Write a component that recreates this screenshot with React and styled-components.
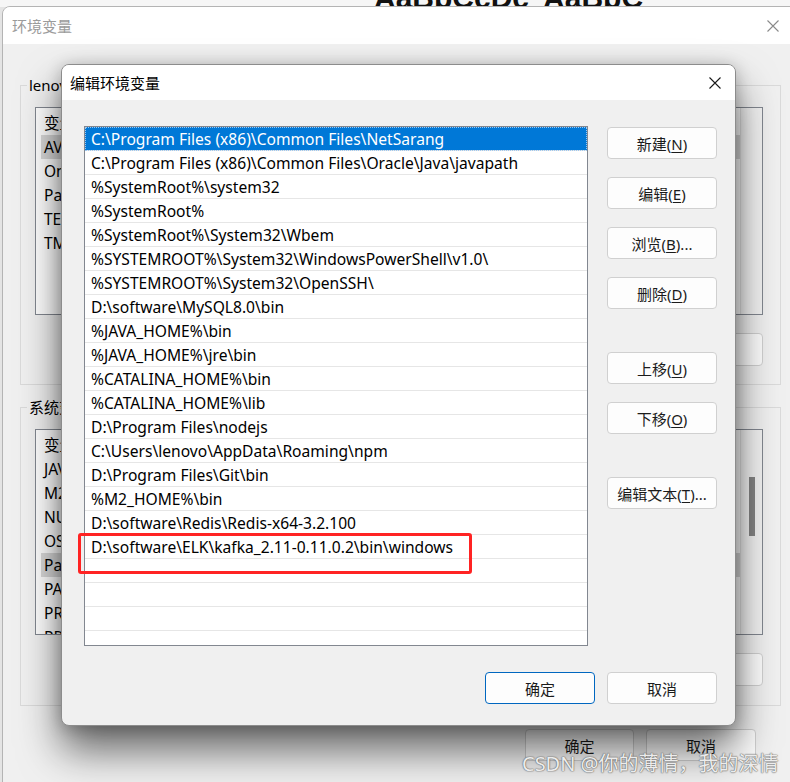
import React from 'react';
import styled, { createGlobalStyle } from 'styled-components';

const GlobalStyle = createGlobalStyle`
  html, body { margin: 0; padding: 0; }
  body {
    width: 790px;
    height: 782px;
    overflow: hidden;
    background: #e4e4e4;
    font-family: "Noto Sans", "Noto Sans CJK SC", sans-serif;
  }
`;

const Desktop = styled.div`
  position: relative;
  width: 790px;
  height: 782px;
  overflow: hidden;
  background: #e4e4e4;
`;

const Ribbon = styled.div`
  height: 7px;
  display: flex;
  align-items: flex-end;
  gap: 14px;
  overflow: hidden;
  background: #f6f6f6;
  padding-left: 374px;
`;

const RibbonText = styled.span`
  font: bold 30px/30px "Liberation Sans", sans-serif;
  color: #111;
  margin-bottom: -6px;
  white-space: nowrap;
`;

/* ---------- back window: 环境变量 ---------- */

const BackWindow = styled.div`
  position: absolute;
  left: 2px;
  top: 6px;
  width: 800px;
  height: 800px;
  box-sizing: border-box;
  border: 1px solid #b4b4b4;
  border-radius: 8px 8px 0 0;
  background: #f0f0f0;
  overflow: hidden;
  display: flex;
  flex-direction: column;
`;

const TitleBar = styled.div`
  height: ${p => p.$h}px;
  flex: none;
  display: flex;
  align-items: center;
  justify-content: space-between;
  background: #fff;
  padding-left: ${p => p.$pl}px;
  font-size: 15px;
  color: ${p => (p.$inactive ? '#9b9b9b' : '#000')};
`;

const CloseBox = styled.div`
  width: 46px;
  height: 100%;
  display: flex;
  align-items: center;
  justify-content: center;
  margin-right: ${p => p.$mr}px;
`;

const BackBody = styled.div`
  padding: 41px 20px 0 17px;
  display: flex;
  flex-direction: column;
`;

const Group = styled.div`
  border: 1px solid #dadada;
  padding: 0 17px ${p => p.$pb}px 14px;
  margin-top: ${p => p.$mt}px;
  display: flex;
  flex-direction: column;
`;

const Legend = styled.span`
  align-self: flex-start;
  margin: -11px 0 0 -8px;
  padding: 0 2px;
  line-height: 20px;
  font-size: 15px;
  color: #000;
  background: #f0f0f0;
`;

const BackList = styled.div`
  margin-top: 12px;
  height: ${p => p.$h}px;
  box-sizing: border-box;
  border: 1px solid #828790;
  background: #fff;
  display: flex;
  overflow: hidden;
`;

const BackRows = styled.div`
  flex: 1;
  padding: 3px 0 0 5px;
`;

const BackRow = styled.div`
  height: 24px;
  line-height: 24px;
  padding-left: 3px;
  font-size: 15.5px;
  color: #000;
  background: ${p => (p.$sel ? '#d9d9d9' : 'transparent')};
  white-space: nowrap;
`;

const ScrollTrack = styled.div`
  width: 21px;
  flex: none;
  border-left: 1px solid #e3e3e3;
  background: #f3f3f3;
  display: flex;
  justify-content: center;
  padding-top: ${p => p.$thumbTop}px;
`;

const ScrollThumb = styled.div`
  width: 6px;
  height: 59px;
  background: #858585;
`;

const ButtonRow = styled.div`
  display: flex;
  justify-content: flex-end;
  gap: 12px;
  margin-top: ${p => p.$mt}px;
  padding-right: ${p => p.$pr || 0}px;
`;

const Button = styled.button`
  box-sizing: border-box;
  width: ${p => p.$w || 110}px;
  height: ${p => p.$h || 32}px;
  margin-top: ${p => p.$gap || 0}px;
  padding: 0;
  flex: none;
  background: #fdfdfd;
  border: 1px solid ${p => (p.$primary ? '#0067c0' : '#d0d0d0')};
  border-radius: 4px;
  font-family: "Noto Sans", "Noto Sans CJK SC", sans-serif;
  font-size: 15px;
  color: #1b1b1b;
  u { text-underline-offset: 2px; }
`;

/* ---------- front dialog: 编辑环境变量 ---------- */

const Dialog = styled.div`
  position: absolute;
  left: 61px;
  top: 64px;
  width: 675px;
  height: 662px;
  box-sizing: border-box;
  border: 1px solid #8c8c8c;
  border-radius: 8px;
  overflow: hidden;
  background: #f0f0f0;
  box-shadow: 0 24px 42px rgba(0, 0, 0, 0.58), 0 2px 16px rgba(0, 0, 0, 0.22);
  display: flex;
  flex-direction: column;
`;

const DialogBody = styled.div`
  display: grid;
  grid-template-columns: 504px 110px;
  column-gap: 19px;
  padding: 26px 18px 0 22px;
`;

const PathList = styled.div`
  position: relative;
  height: 520px;
  box-sizing: border-box;
  border: 1px solid #828790;
  background: #fff;
`;

const Rows = styled.div`
  height: 100%;
  overflow: hidden;
`;

const PathRow = styled.div`
  box-sizing: border-box;
  height: 24px;
  line-height: 24px;
  padding-left: 6px;
  border-bottom: 1px solid #e6e6e6;
  font-size: 15.6px;
  white-space: nowrap;
  color: ${p => (p.$sel ? '#fff' : '#000')};
  background: ${p => (p.$sel ? '#0078d7' : '#fff')};
  outline: ${p => (p.$sel ? '1px dotted #9fc9f0' : 'none')};
  outline-offset: -1px;
`;

const Highlight = styled.div`
  position: absolute;
  left: -7px;
  top: 406px;
  width: 394px;
  height: 41px;
  box-sizing: border-box;
  border: 3px solid #ff2323;
  border-radius: 3px;
  pointer-events: none;
`;

const SideButtons = styled.div`
  display: flex;
  flex-direction: column;
  gap: 18px;
  padding-top: 1px;
`;

const Footer = styled.div`
  display: flex;
  justify-content: flex-end;
  gap: 12px;
  padding: 26px 18px 0 0;
`;

const Watermark = styled.div`
  position: absolute;
  left: 522px;
  top: 751px;
  font-family: "Noto Sans", "Noto Sans CJK SC", sans-serif;
  font-size: 20px;
  line-height: 26px;
  color: rgba(250, 250, 250, 0.92);
  text-shadow: 0 0 1px #6b6b6b, 0 0 1px #6b6b6b, 0 0 2px rgba(0, 0, 0, 0.35);
  white-space: nowrap;
`;

const CloseIcon = ({ color }) => (
  <svg width="12" height="12" viewBox="0 0 12 12">
    <path d="M0.5 0.5 L11.5 11.5 M11.5 0.5 L0.5 11.5" stroke={color} strokeWidth="1.1" fill="none" />
  </svg>
);

const paths = [
  'C:\\Program Files (x86)\\Common Files\\NetSarang',
  'C:\\Program Files (x86)\\Common Files\\Oracle\\Java\\javapath',
  '%SystemRoot%\\system32',
  '%SystemRoot%',
  '%SystemRoot%\\System32\\Wbem',
  '%SYSTEMROOT%\\System32\\WindowsPowerShell\\v1.0\\',
  '%SYSTEMROOT%\\System32\\OpenSSH\\',
  'D:\\software\\MySQL8.0\\bin',
  '%JAVA_HOME%\\bin',
  '%JAVA_HOME%\\jre\\bin',
  '%CATALINA_HOME%\\bin',
  '%CATALINA_HOME%\\lib',
  'D:\\Program Files\\nodejs',
  'C:\\Users\\lenovo\\AppData\\Roaming\\npm',
  'D:\\Program Files\\Git\\bin',
  '%M2_HOME%\\bin',
  'D:\\software\\Redis\\Redis-x64-3.2.100',
  'D:\\software\\ELK\\kafka_2.11-0.11.0.2\\bin\\windows',
  '', '', '', '',
];

const userVars = ['变量', 'AVD_HOME', 'OneDrive', 'Path', 'TEMP', 'TMP'];
const sysVars = ['变量', 'JAVA_HOME', 'M2_HOME', 'NUMBER_OF_PROCESSORS', 'OS', 'Path', 'PATHEXT', 'PROCESSOR_ARCHITECTURE', 'PROCESSOR_IDENTIFIER'];

const Label = ({ text, k }) => {
  const i = text.indexOf(k);
  return (
    <>
      {text.slice(0, i)}
      <u>{k}</u>
      {text.slice(i + 1)}
    </>
  );
};

export default function App() {
  return (
    <Desktop>
      <GlobalStyle />
      <Ribbon>
        <RibbonText>AaBbCcDc</RibbonText>
        <RibbonText>AaBbC</RibbonText>
      </Ribbon>

      <BackWindow>
        <TitleBar $h={37} $pl={9} $inactive>
          环境变量
          <CloseBox $mr={5}><CloseIcon color="#8a8a8a" /></CloseBox>
        </TitleBar>
        <BackBody>
          <Group $mt={0} $pb={18}>
            <Legend>lenovo 的用户变量(U)</Legend>
            <BackList $h={208}>
              <BackRows>
                {userVars.map((v, i) => (
                  <BackRow key={v} $sel={i === 1}>{v}</BackRow>
                ))}
              </BackRows>
              <ScrollTrack $thumbTop={0} />
            </BackList>
            <ButtonRow $mt={18}>
              <Button $h={33}>新建(N)...</Button>
              <Button $h={33}>编辑(E)...</Button>
              <Button $h={33}>删除(D)</Button>
            </ButtonRow>
          </Group>
          <Group $mt={22} $pb={19}>
            <Legend>系统变量(S)</Legend>
            <BackList $h={206}>
              <BackRows>
                {sysVars.map((v, i) => (
                  <BackRow key={v + i} $sel={i === 5}>{v}</BackRow>
                ))}
              </BackRows>
              <ScrollTrack $thumbTop={47}><ScrollThumb /></ScrollTrack>
            </BackList>
            <ButtonRow $mt={18}>
              <Button $h={33}>新建(W)...</Button>
              <Button $h={33}>编辑(I)...</Button>
              <Button $h={33}>删除(L)</Button>
            </ButtonRow>
          </Group>
          <ButtonRow $mt={23} $pr={25}>
            <Button $w={109}>确定</Button>
            <Button>取消</Button>
          </ButtonRow>
        </BackBody>
      </BackWindow>

      <Dialog>
        <TitleBar $h={35} $pl={8}>
          编辑环境变量
          <CloseBox $mr={-3}><CloseIcon color="#1a1a1a" /></CloseBox>
        </TitleBar>
        <DialogBody>
          <PathList>
            <Rows>
              {paths.map((p, i) => (
                <PathRow key={i} $sel={i === 0}>{p}</PathRow>
              ))}
            </Rows>
            <Highlight />
          </PathList>
          <SideButtons>
            <Button><Label text="新建(N)" k="N" /></Button>
            <Button><Label text="编辑(E)" k="E" /></Button>
            <Button><Label text="浏览(B)..." k="B" /></Button>
            <Button><Label text="删除(D)" k="D" /></Button>
            <Button $gap={25}><Label text="上移(U)" k="U" /></Button>
            <Button><Label text="下移(O)" k="O" /></Button>
            <Button $gap={25}><Label text="编辑文本(T)..." k="T" /></Button>
          </SideButtons>
        </DialogBody>
        <Footer>
          <Button $primary>确定</Button>
          <Button>取消</Button>
        </Footer>
      </Dialog>

      <Watermark>CSDN @你的薄情，我的深情</Watermark>
    </Desktop>
  );
}
